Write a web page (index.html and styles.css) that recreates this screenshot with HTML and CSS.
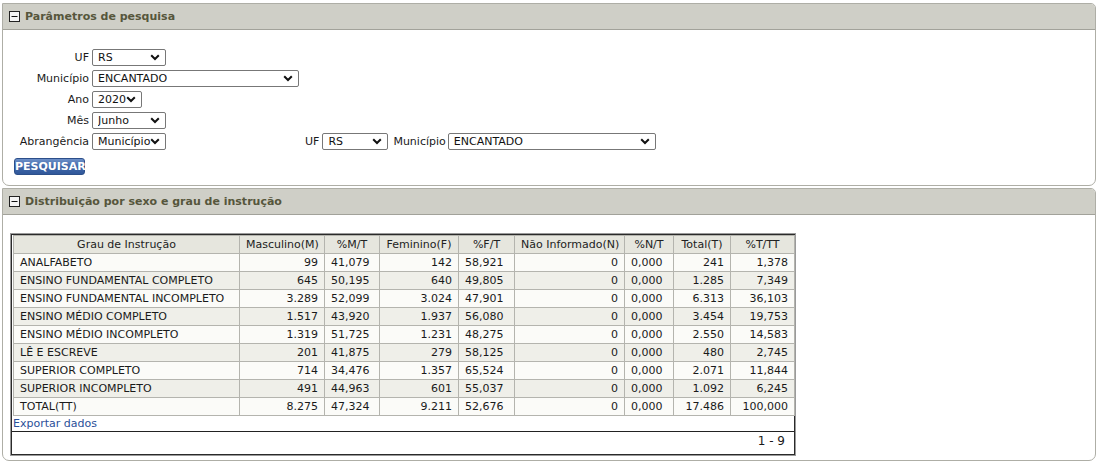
FILE: index.html
```html
<!DOCTYPE html>
<html lang="pt-BR">
<head>
<meta charset="utf-8">
<title>Pesquisa</title>
<link rel="stylesheet" href="styles.css">
</head>
<body>
<div class="panel panel-params">
  <div class="panel-head">
    <svg class="toggle" width="11" height="11" viewBox="0 0 11 11"><rect x="0.5" y="0.5" width="10" height="10" fill="#f4f4f4" stroke="#222"/><path d="M2.5 5.5 H8.5" stroke="#111" stroke-width="1.2"/></svg>
    <span class="panel-title">Parâmetros de pesquisa</span>
  </div>
  <div class="panel-body form">
    <div class="frow"><label class="lbl">UF</label><select class="sel w74"><option>RS</option></select></div>
    <div class="frow"><label class="lbl">Município</label><select class="sel w207"><option>ENCANTADO</option></select></div>
    <div class="frow"><label class="lbl">Ano</label><select class="sel w50"><option>2020</option></select></div>
    <div class="frow"><label class="lbl">Mês</label><select class="sel w74"><option>Junho</option></select></div>
    <div class="frow"><label class="lbl">Abrangência</label><select class="sel w74"><option>Município</option></select>
      <div class="subgroup">
        <label class="sublbl">UF</label><select class="sel w66"><option>RS</option></select>
        <label class="sublbl mun">Município</label><select class="sel w208"><option>ENCANTADO</option></select>
      </div>
    </div>
    <button class="btn">PESQUISAR</button>
  </div>
</div>

<div class="panel panel-data">
  <div class="panel-head">
    <svg class="toggle" width="11" height="11" viewBox="0 0 11 11"><rect x="0.5" y="0.5" width="10" height="10" fill="#f4f4f4" stroke="#222"/><path d="M2.5 5.5 H8.5" stroke="#111" stroke-width="1.2"/></svg>
    <span class="panel-title">Distribuição por sexo e grau de instrução</span>
  </div>
  <div class="panel-body data">
    <div class="grid">
      <table class="tbl">
        <colgroup>
          <col class="c-grau"><col class="c-m"><col class="c-mp"><col class="c-f"><col class="c-fp"><col class="c-n"><col class="c-np"><col class="c-t"><col class="c-tp">
        </colgroup>
        <thead>
          <tr><th>Grau de Instrução</th><th>Masculino(M)</th><th>%M/T</th><th>Feminino(F)</th><th>%F/T</th><th>Não Informado(N)</th><th>%N/T</th><th>Total(T)</th><th>%T/TT</th></tr>
        </thead>
        <tbody>
          <tr><td>ANALFABETO</td><td class="r">99</td><td>41,079</td><td class="r">142</td><td>58,921</td><td class="r">0</td><td>0,000</td><td class="r">241</td><td class="r">1,378</td></tr>
          <tr><td>ENSINO FUNDAMENTAL COMPLETO</td><td class="r">645</td><td>50,195</td><td class="r">640</td><td>49,805</td><td class="r">0</td><td>0,000</td><td class="r">1.285</td><td class="r">7,349</td></tr>
          <tr><td>ENSINO FUNDAMENTAL INCOMPLETO</td><td class="r">3.289</td><td>52,099</td><td class="r">3.024</td><td>47,901</td><td class="r">0</td><td>0,000</td><td class="r">6.313</td><td class="r">36,103</td></tr>
          <tr><td>ENSINO MÉDIO COMPLETO</td><td class="r">1.517</td><td>43,920</td><td class="r">1.937</td><td>56,080</td><td class="r">0</td><td>0,000</td><td class="r">3.454</td><td class="r">19,753</td></tr>
          <tr><td>ENSINO MÉDIO INCOMPLETO</td><td class="r">1.319</td><td>51,725</td><td class="r">1.231</td><td>48,275</td><td class="r">0</td><td>0,000</td><td class="r">2.550</td><td class="r">14,583</td></tr>
          <tr><td>LÊ E ESCREVE</td><td class="r">201</td><td>41,875</td><td class="r">279</td><td>58,125</td><td class="r">0</td><td>0,000</td><td class="r">480</td><td class="r">2,745</td></tr>
          <tr><td>SUPERIOR COMPLETO</td><td class="r">714</td><td>34,476</td><td class="r">1.357</td><td>65,524</td><td class="r">0</td><td>0,000</td><td class="r">2.071</td><td class="r">11,844</td></tr>
          <tr><td>SUPERIOR INCOMPLETO</td><td class="r">491</td><td>44,963</td><td class="r">601</td><td>55,037</td><td class="r">0</td><td>0,000</td><td class="r">1.092</td><td class="r">6,245</td></tr>
          <tr><td>TOTAL(TT)</td><td class="r">8.275</td><td>47,324</td><td class="r">9.211</td><td>52,676</td><td class="r">0</td><td>0,000</td><td class="r">17.486</td><td class="r">100,000</td></tr>
        </tbody>
      </table>
      <a class="export" href="#">Exportar dados</a>
      <div class="pager">1 - 9</div>
    </div>
  </div>
</div>
</body>
</html>
```

FILE: styles.css
```css
html, body {
  margin: 0;
  padding: 0;
  background: #ffffff;
}
body {
  padding: 3px 4px 0 2px;
  font-family: "DejaVu Sans", Verdana, sans-serif;
  font-size: 11px;
  color: #1a1a1a;
}
.panel {
  border: 1px solid #aeaea6;
  border-radius: 0 5px 7px 7px;
  background: #ffffff;
  overflow: hidden;
}
.panel-data {
  margin-top: 2px;
}
.panel-head {
  height: 25px;
  background: #cfcfc7;
  border-bottom: 1px solid #a2a29a;
  display: flex;
  align-items: center;
  padding-left: 6px;
  gap: 5px;
}
.toggle {
  display: block;
  flex: none;
}
.panel-title {
  font-weight: bold;
  font-size: 11px;
  color: #56563c;
}
.form {
  padding: 19px 0 10px 5px;
  display: flex;
  flex-direction: column;
  align-items: flex-start;
  gap: 4px;
}
.frow {
  display: flex;
  align-items: center;
  height: 17px;
}
.lbl {
  width: 81px;
  margin-right: 3px;
  text-align: right;
  flex: none;
}
.sel {
  appearance: none;
  -webkit-appearance: none;
  height: 17px;
  box-sizing: border-box;
  border: 1px solid #777;
  border-radius: 2px;
  background: #fff url("data:image/svg+xml;utf8,<svg xmlns='http://www.w3.org/2000/svg' width='10' height='7' viewBox='0 0 10 7'><path d='M1.2 1.2 L5 5 L8.8 1.2' fill='none' stroke='%23111' stroke-width='2'/></svg>") no-repeat right 5px center;
  font-family: "DejaVu Sans", Verdana, sans-serif;
  font-size: 11px;
  color: #111;
  padding: 0 0 0 5px;
  margin: 0;
  line-height: 15px;
}
.w50 { width: 50px; }
.w66 { width: 66px; }
.w74 { width: 74px; }
.w207 { width: 207px; }
.w208 { width: 208px; }
.subgroup {
  display: flex;
  align-items: center;
  margin-left: 139px;
}
.sublbl {
  margin-right: 3px;
}
.sublbl.mun {
  margin-left: 5px;
  margin-right: 2px;
}
.btn {
  margin: 4px 0 0 6px;
  width: 71px;
  height: 17px;
  padding: 0;
  border: 1px solid #2c4f8a;
  border-radius: 3px;
  background: linear-gradient(#6d90c8, #4168a9 50%, #30579a);
  color: #fff;
  font-family: "DejaVu Sans", Verdana, sans-serif;
  font-weight: bold;
  font-size: 11px;
  line-height: 15px;
}
.data {
  padding: 19px 0 5px 7px;
}
.grid {
  width: 782px;
  border: 1px solid #2a2a2a;
  box-shadow: 0 0 0 1px #9a9a9a;
  margin-left: 1px;
}
.tbl {
  border-collapse: collapse;
  table-layout: fixed;
  width: 781px;
  margin: 0 0 0 1px;
}
.c-grau { width: 226px; }
.c-m { width: 85px; }
.c-mp { width: 55px; }
.c-f { width: 79px; }
.c-fp { width: 56px; }
.c-n { width: 110px; }
.c-np { width: 49px; }
.c-t { width: 57px; }
.c-tp { width: 64px; }
.tbl th, .tbl td {
  border: 1px solid #b4b4ae;
  height: 17px;
  padding: 0 6px;
  font-size: 11px;
  white-space: nowrap;
  overflow: hidden;
}
.tbl th {
  background: #e6e6de;
  font-weight: normal;
  text-align: center;
  color: #222;
}
.tbl tbody tr:nth-child(odd) td {
  background: #fbfbf8;
}
.tbl tbody tr:nth-child(even) td {
  background: #efefe9;
}
.tbl td.r {
  text-align: right;
}
.export {
  display: block;
  height: 15px;
  line-height: 15px;
  padding-left: 1px;
  color: #2a4f98;
  text-decoration: none;
}
.pager {
  border-top: 1px solid #222;
  height: 22px;
  line-height: 19px;
  text-align: right;
  padding-right: 9px;
  font-size: 12px;
}
```
